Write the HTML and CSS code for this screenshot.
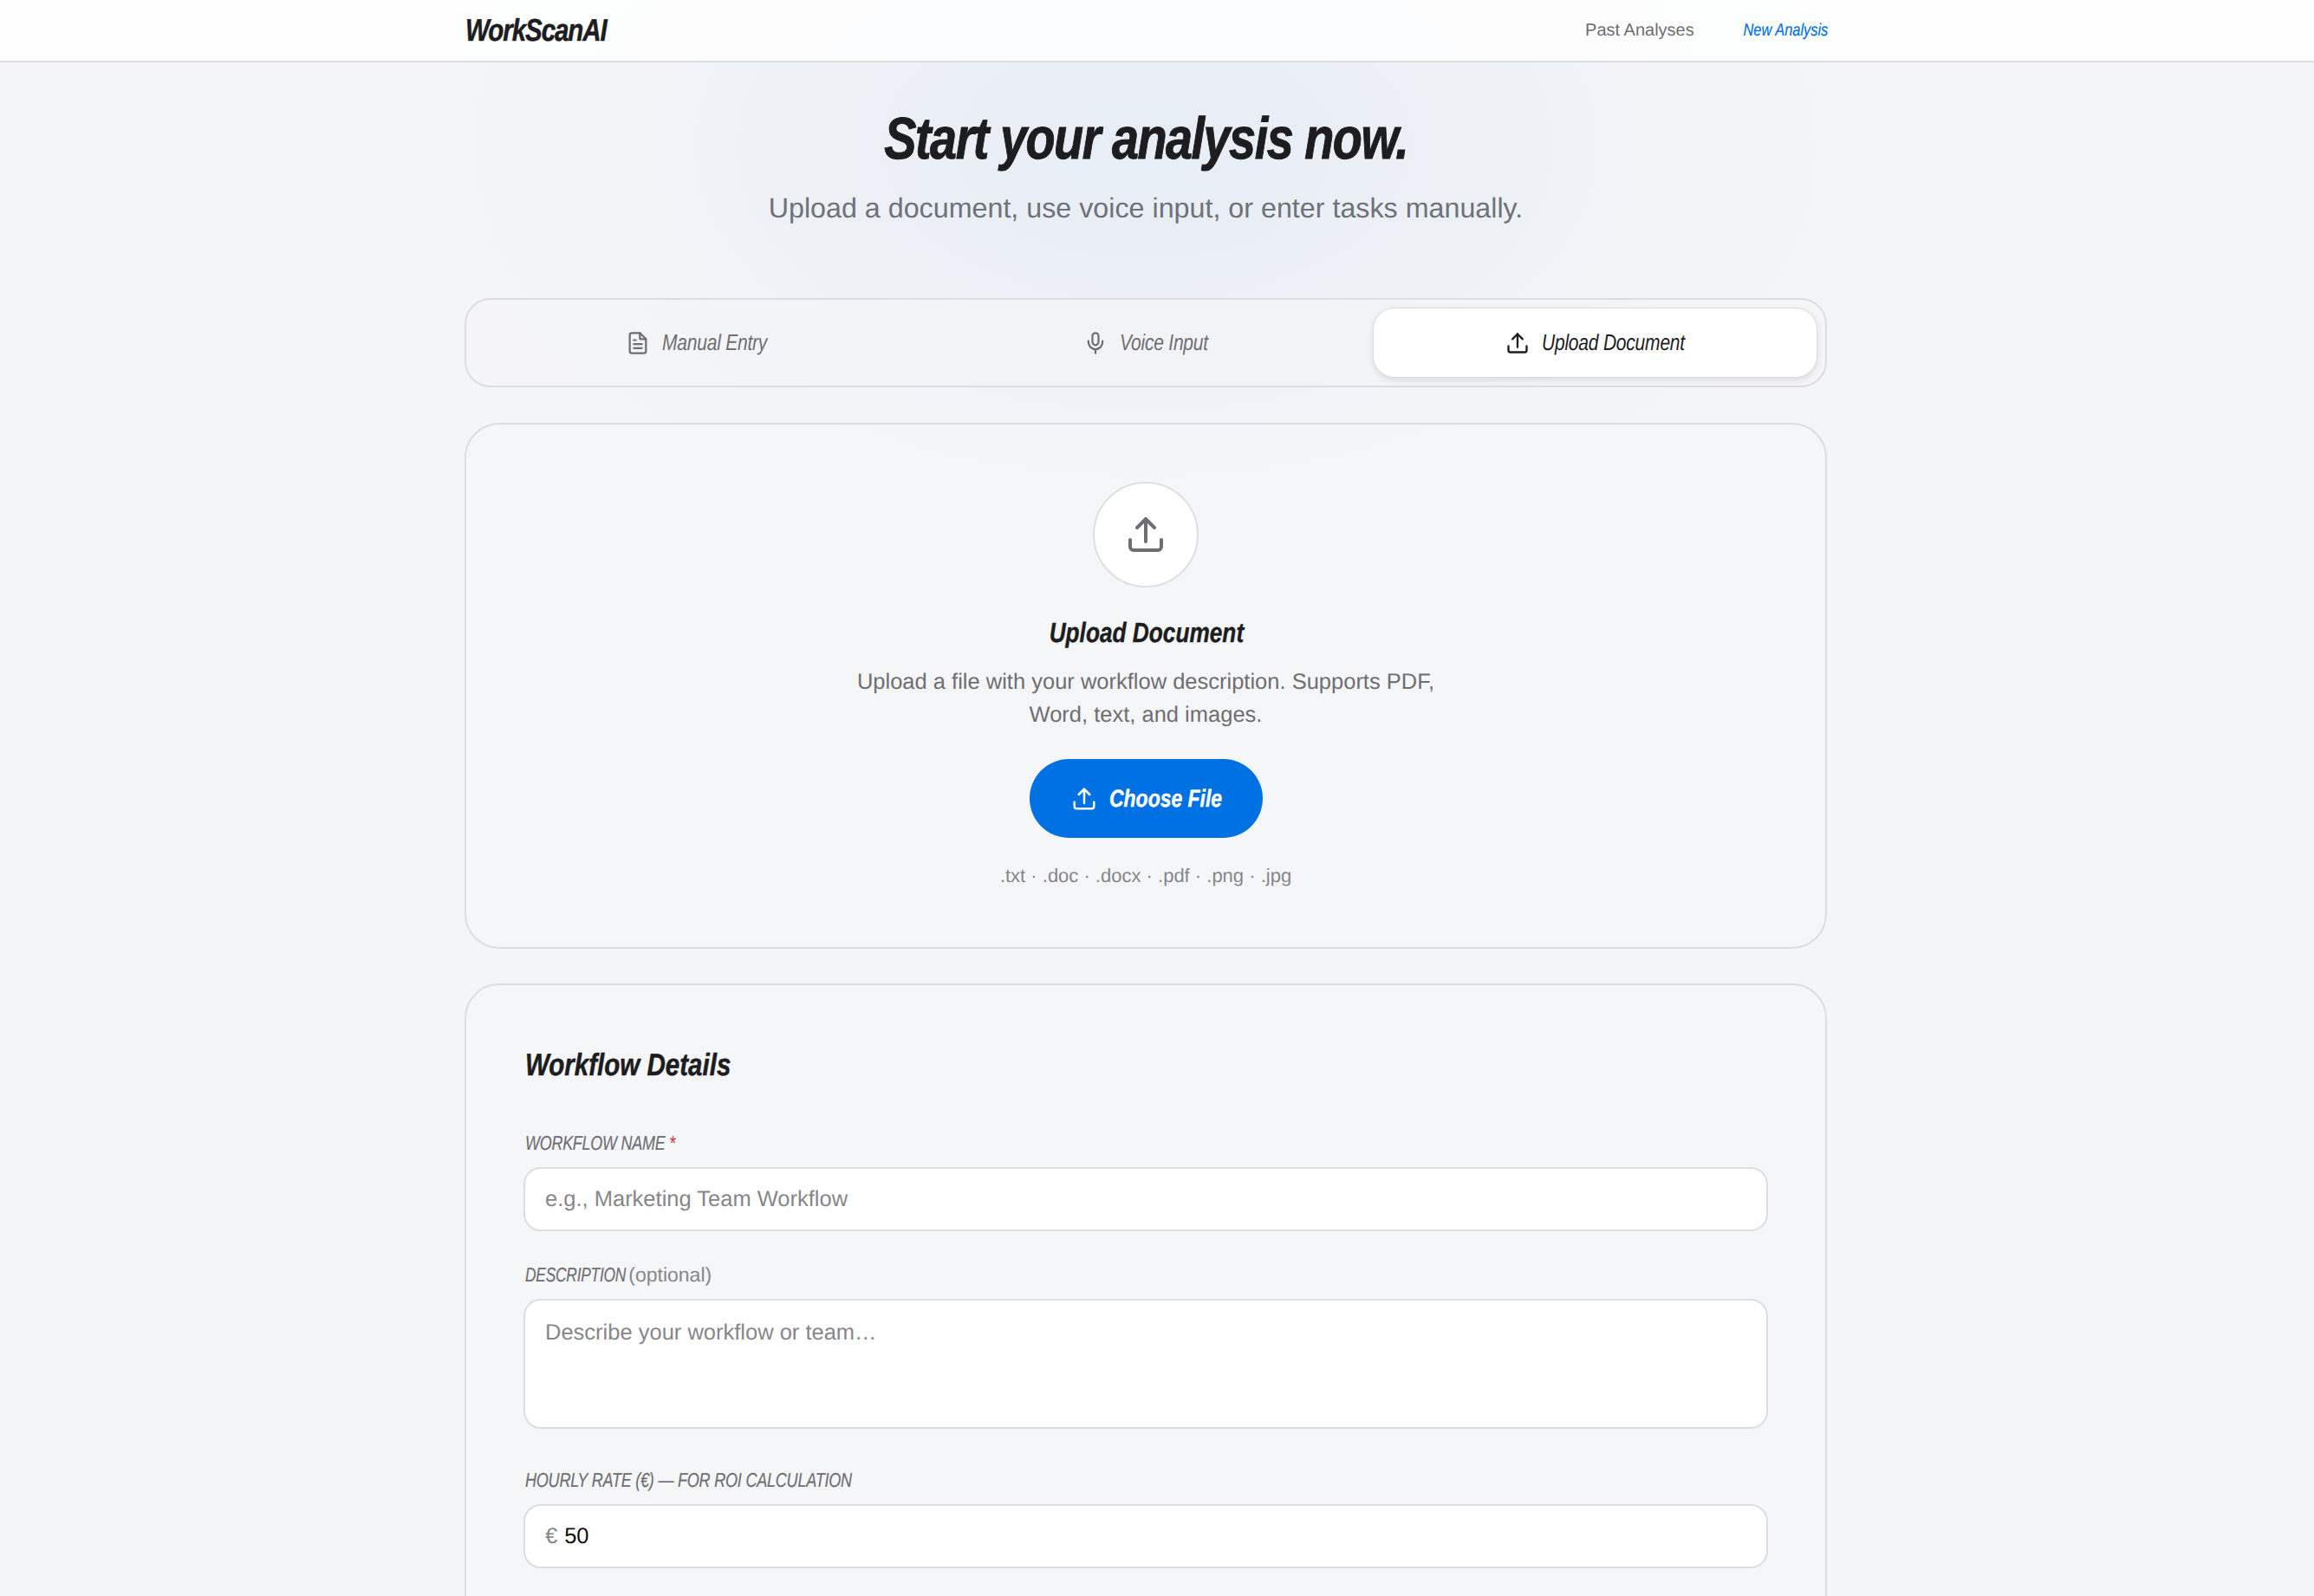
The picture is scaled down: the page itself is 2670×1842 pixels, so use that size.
FILE: index.html
```html
<!DOCTYPE html>
<html lang="en">
<head>
    <meta charset="UTF-8">
    <title>WorkScanAI - New Analysis</title>
    <link rel="stylesheet" href="styles.css">
</head>
<body>
    <header class="topbar">
        <div class="topbar-inner">
            <a class="logo" href="#"><span class="narrow narrow-left">WorkScanAI</span></a>
            <nav class="topnav">
                <a class="topnav-link" href="#">Past Analyses</a>
                <a class="topnav-link topnav-active" href="#">New Analysis</a>
            </nav>
        </div>
    </header>

    <main class="page">
        <section class="hero">
            <h1 class="hero-title"><span class="narrow">Start your analysis now.</span></h1>
            <p class="hero-sub">Upload a document, use voice input, or enter tasks manually.</p>
        </section>

        <div class="tabs">
            <button class="tab">
                <svg class="tab-icon" viewBox="0 0 24 24" fill="none" stroke="currentColor" stroke-width="1.9" stroke-linecap="round" stroke-linejoin="round"><path d="M14 2H6a2 2 0 0 0-2 2v16a2 2 0 0 0 2 2h12a2 2 0 0 0 2-2V8z"/><path d="M14 2v6h6"/><path d="M8 13h8"/><path d="M8 17h8"/><path d="M8 9h2"/></svg>
                <span class="narrow narrow-left label-manual">Manual Entry</span>
            </button>
            <button class="tab">
                <svg class="tab-icon" viewBox="0 0 24 24" fill="none" stroke="currentColor" stroke-width="1.9" stroke-linecap="round" stroke-linejoin="round"><rect x="9" y="2" width="6" height="12" rx="3"/><path d="M19 10v1a7 7 0 0 1-14 0v-1"/><path d="M12 18v4"/></svg>
                <span class="narrow narrow-left label-voice">Voice Input</span>
            </button>
            <button class="tab tab-active">
                <svg class="tab-icon" viewBox="0 0 24 24" fill="none" stroke="currentColor" stroke-width="2" stroke-linecap="round" stroke-linejoin="round"><path d="M3 15v4a2 2 0 0 0 2 2h14a2 2 0 0 0 2-2v-4"/><path d="M12 16V3"/><path d="M7 8l5-5 5 5"/></svg>
                <span class="narrow narrow-left label-upload">Upload Document</span>
            </button>
        </div>

        <section class="card upload-card">
            <div class="upload-circle">
                <svg class="upload-icon" viewBox="0 0 24 24" fill="none" stroke="currentColor" stroke-width="2" stroke-linecap="round" stroke-linejoin="round"><path d="M3 15v4a2 2 0 0 0 2 2h14a2 2 0 0 0 2-2v-4"/><path d="M12 16V3"/><path d="M7 8l5-5 5 5"/></svg>
            </div>
            <h3 class="upload-title"><span class="narrow">Upload Document</span></h3>
            <p class="upload-desc">Upload a file with your workflow description. Supports PDF, Word, text, and images.</p>
            <button class="choose-btn">
                <svg class="choose-icon" viewBox="0 0 24 24" fill="none" stroke="currentColor" stroke-width="2" stroke-linecap="round" stroke-linejoin="round"><path d="M3 15v4a2 2 0 0 0 2 2h14a2 2 0 0 0 2-2v-4"/><path d="M12 16V3"/><path d="M7 8l5-5 5 5"/></svg>
                <span class="narrow narrow-left label-choose">Choose File</span>
            </button>
            <p class="upload-formats">.txt · .doc · .docx · .pdf · .png · .jpg</p>
        </section>

        <section class="card form-card">
            <h2 class="form-title"><span class="narrow narrow-left">Workflow Details</span></h2>

            <div class="field">
                <label class="field-label"><span class="narrow narrow-left">WORKFLOW NAME <span class="required">*</span></span></label>
                <input class="field-input" type="text" placeholder="e.g., Marketing Team Workflow">
            </div>

            <div class="field field-tall">
                <label class="field-label"><span class="narrow narrow-left label-desc">DESCRIPTION</span> <span class="optional">(optional)</span></label>
                <textarea class="field-input field-textarea" placeholder="Describe your workflow or team…"></textarea>
            </div>

            <div class="field">
                <label class="field-label"><span class="narrow narrow-left label-hourly">HOURLY RATE (€) — FOR ROI CALCULATION</span></label>
                <div class="field-input rate-box">
                    <span class="rate-sign">€</span>
                    <input class="rate-input" type="text" value="50">
                </div>
            </div>
        </section>
    </main>
</body>
</html>
```

FILE: styles.css
```css
* {
    box-sizing: border-box;
}
html, body {
    height: 1842px;
    overflow: hidden;
}
body {
    margin: 0;
    padding-right: 26px;
    font-family: "Liberation Sans", Arial, sans-serif;
    text-rendering: geometricPrecision;
    color: #1d1d1f;
    background-color: #f4f5f7;
    background-image: radial-gradient(ellipse 820px 480px at 1322px 170px, #e7edf6 0%, #edf1f6 45%, rgba(244,245,247,0) 100%);
    background-repeat: no-repeat;
}
button, input, textarea {
    font-family: inherit;
    text-rendering: inherit;
}

/* No narrow face is installed, so squeeze the italic text */
.narrow {
    display: inline-block;
    white-space: nowrap;
    transform: scaleX(0.82);
}
.narrow-left {
    transform-origin: left center;
}

/* Top bar */
.topbar {
    height: 72px;
    margin-right: -26px;
    padding-right: 26px;
    background: rgba(255,255,255,0.84);
    border-bottom: 2px solid #dcdde0;
}
.topbar-inner {
    width: 1574px;
    height: 70px;
    margin: 0 auto;
    display: flex;
    align-items: center;
    justify-content: space-between;
}
.logo {
    font-size: 36px;
    font-weight: 700;
    font-style: italic;
    letter-spacing: -1.3px;
    color: #1d1d1f;
    text-decoration: none;
    padding-left: 2px;
    -webkit-text-stroke: 0.5px #1d1d1f;
}
.topnav {
    display: flex;
    align-items: center;
    gap: 56px;
}
.topnav-link {
    font-size: 20px;
    color: #6e6e73;
    text-decoration: none;
}
.topnav-active {
    display: inline-block;
    margin-left: -21px;
    transform: scaleX(0.82);
    transform-origin: right center;
    color: #0071e3;
    font-style: italic;
    -webkit-text-stroke: 0.2px #0071e3;
}

/* Hero */
.page {
    width: 1572px;
    margin: 0 auto;
}
.hero {
    text-align: center;
    padding-top: 48px;
    margin-bottom: 82px;
}
.hero-title {
    margin: 0;
    font-size: 68px;
    line-height: 80px;
    font-weight: 700;
    font-style: italic;
    letter-spacing: -1.8px;
    color: #1d1d1f;
    -webkit-text-stroke: 1px #1d1d1f;
}
.hero-sub {
    margin: 18px 0 0;
    font-size: 32.25px;
    line-height: 44px;
    color: #6e7279;
}

/* Tabs */
.tabs {
    height: 103px;
    padding: 10px;
    display: grid;
    grid-template-columns: repeat(3, 1fr);
    gap: 8px;
    border: 2px solid #dcdde0;
    border-radius: 30px;
    background: rgba(245,246,248,0.5);
    margin-bottom: 41px;
}
.tab {
    display: flex;
    align-items: center;
    justify-content: center;
    gap: 14px;
    border: none;
    border-radius: 24px;
    background: none;
    font-size: 26px;
    font-style: italic;
    letter-spacing: -0.3px;
    color: #6e6e73;
}
.tab .narrow {
    transform: scaleX(0.81);
}
.label-manual { margin-right: -28px; }
.label-voice { margin-right: -24px; }
.label-upload { margin-right: -39px; }
.tab-icon {
    width: 28px;
    height: 28px;
}
.tab-active {
    background: #fff;
    color: #1d1d1f;
    box-shadow: 0 0 0 1px #dcdde0, 0 3px 8px rgba(0,0,0,0.12);
}

/* Cards */
.card {
    border: 2px solid #dcdde0;
    border-radius: 40px;
    background: rgba(245,246,248,0.6);
}
.upload-card {
    height: 607px;
    padding-top: 66px;
    display: flex;
    flex-direction: column;
    align-items: center;
    text-align: center;
    margin-bottom: 40px;
}
.upload-circle {
    width: 122px;
    height: 122px;
    border-radius: 50%;
    background: #fff;
    border: 2px solid #dedfe2;
    display: flex;
    align-items: center;
    justify-content: center;
    color: #6e6e73;
}
.upload-icon {
    width: 48px;
    height: 48px;
}
.upload-title {
    margin: 32px 0 0;
    padding-left: 2px;
    font-size: 32px;
    line-height: 40px;
    font-weight: 700;
    font-style: italic;
    color: #1d1d1f;
    -webkit-text-stroke: 0.4px #1d1d1f;
}
.upload-desc {
    width: 720px;
    margin: 18px 0 0;
    font-size: 25.5px;
    line-height: 38px;
    color: #6e6e73;
}
.choose-btn {
    margin-top: 32px;
    width: 269px;
    height: 91px;
    border: none;
    border-radius: 46px;
    background: #0071e3;
    color: #fff;
    display: flex;
    align-items: center;
    justify-content: center;
    gap: 14px;
    font-size: 28px;
    font-weight: 700;
    font-style: italic;
    -webkit-text-stroke: 0.4px #fff;
}
.label-choose { margin-right: -29px; }
.choose-icon {
    width: 30px;
    height: 30px;
    margin-left: 2px;
}
.upload-formats {
    margin: 28px 0 0;
    font-size: 22px;
    line-height: 32px;
    color: #86868b;
}

/* Form */
.form-card {
    height: 900px;
    padding: 68px 66px 0;
}
.form-title {
    margin: 0 0 52px;
    padding-left: 2px;
    font-size: 36px;
    line-height: 48px;
    font-weight: 700;
    font-style: italic;
    color: #1d1d1f;
    -webkit-text-stroke: 0.5px #1d1d1f;
}
.field {
    margin-bottom: 36px;
}
.field-tall {
    margin-bottom: 45px;
}
.field-label {
    display: block;
    padding-left: 2px;
    font-size: 23px;
    line-height: 28px;
    color: #6e6e73;
    margin-bottom: 14px;
}
.field-label .narrow {
    font-style: italic;
    letter-spacing: -0.3px;
    transform: scaleX(0.78);
    -webkit-text-stroke: 0.2px currentColor;
}
.field-label .label-desc {
    margin-right: -41px;
    transform: scaleX(0.755);
}
.field-label .label-hourly {
    transform: scaleX(0.785);
}
.required {
    color: #d9363e;
}
.optional {
    color: #86868b;
}
.field-input {
    display: block;
    width: 100%;
    height: 74px;
    padding: 0 23px;
    border: 2px solid #dcdde0;
    border-radius: 20px;
    background: #fff;
    font-size: 25.5px;
    color: #1d1d1f;
    outline: none;
}
.field-input::placeholder {
    color: #86868b;
}
.field-textarea {
    height: 150px;
    padding-top: 20px;
    line-height: 34px;
    resize: none;
}
.rate-box {
    display: flex;
    align-items: center;
    gap: 8px;
}
.rate-sign {
    font-size: 25.5px;
    color: #86868b;
}
.rate-input {
    flex: 1;
    border: none;
    outline: none;
    padding: 0;
    background: none;
    font-size: 25.5px;
    color: #111;
}
```
